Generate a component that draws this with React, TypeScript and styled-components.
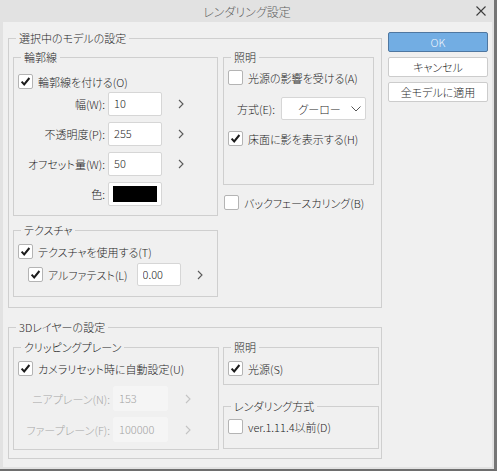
import styled, { createGlobalStyle } from 'styled-components';

const GlobalStyle = createGlobalStyle`
  html, body { margin: 0; padding: 0; background: #767676; }
  body {
    font-family: "Noto Sans CJK JP", "Noto Sans", sans-serif;
    font-size: 11px;
    font-weight: 300;
    font-feature-settings: "palt";
    color: #1f1f1f;
  }
`;

const Window = styled.div`
  box-sizing: border-box;
  width: 497px;
  height: 471px;
  display: flex;
  flex-direction: column;
  background: #e2e2e2;
  border-right: 3px solid #767676;
  border-bottom: 2px solid #6e6e6e;
`;

const TitleBar = styled.div`
  height: 22px;
  flex: none;
  display: grid;
  grid-template-columns: 1fr auto 1fr;
  align-items: center;
`;

const Title = styled.span`
  grid-column: 2;
  font-size: 12px;
  color: #5e5e5e;
`;

const Close = styled.svg`
  grid-column: 3;
  justify-self: end;
  margin-right: 8px;
`;

const Client = styled.div`
  flex: 1;
  margin: 0 2px 2px 3px;
  box-sizing: border-box;
  background: #f0f0f0;
  display: flex;
  gap: 6px;
  padding: 9px 0 0 5px;
`;

const MainColumn = styled.div`
  width: 374px;
  display: flex;
  flex-direction: column;
  gap: 12px;
`;

const ButtonColumn = styled.div`
  width: 100px;
  display: flex;
  flex-direction: column;
  gap: 5px;
  padding-top: 1px;
`;

const Button = styled.button<{ $primary?: boolean }>`
  box-sizing: border-box;
  height: 20px;
  padding: 0;
  font: inherit;
  border-radius: 2px;
  border: 1px solid ${(p) => (p.$primary ? '#4f77a0' : '#cccccc')};
  background: ${(p) => (p.$primary ? '#72ade3' : '#ffffff')};
  color: ${(p) => (p.$primary ? '#eef4fb' : '#1f1f1f')};
`;

const Group = styled.fieldset<{ $width?: number }>`
  margin: 0;
  padding: 0;
  min-width: 0;
  border: 1px solid #cfcfcf;
  ${(p) => (p.$width ? `width: ${p.$width}px; box-sizing: border-box;` : '')}
`;

const Legend = styled.legend`
  margin-left: 7px;
  padding: 0 3px;
  line-height: 14px;
`;

const Body = styled.div<{ $pad: string }>`
  padding: ${(p) => p.$pad};
  display: flex;
  flex-direction: column;
`;

const Split = styled.div<{ $gap: number }>`
  display: flex;
  align-items: flex-start;
  gap: ${(p) => p.$gap}px;
`;

const Stack = styled.div`
  display: flex;
  flex-direction: column;
`;

const CheckRow = styled.label<{ $indent?: number; $top?: number }>`
  display: flex;
  align-items: center;
  gap: 5px;
  height: 15px;
  margin-left: ${(p) => p.$indent ?? 0}px;
  margin-top: ${(p) => p.$top ?? 0}px;
`;

const Box = styled.span`
  box-sizing: border-box;
  width: 15px;
  height: 15px;
  flex: none;
  background: #ffffff;
  border: 1px solid #b4b4b4;
  border-radius: 2px;
  display: flex;
  align-items: center;
  justify-content: center;
`;

const ValueGrid = styled.div<{ $label: number; $input: number; $top: number }>`
  display: grid;
  grid-template-columns: ${(p) => p.$label}px ${(p) => p.$input}px auto;
  column-gap: 3px;
  row-gap: 6px;
  align-items: center;
  margin-top: ${(p) => p.$top}px;
`;

const FieldLabel = styled.span<{ $disabled?: boolean }>`
  text-align: right;
  white-space: nowrap;
  color: ${(p) => (p.$disabled ? '#a8a8a8' : '#1f1f1f')};
`;

const NumberBox = styled.input<{ $width?: number; $height?: number }>`
  box-sizing: border-box;
  width: ${(p) => p.$width ?? 54}px;
  height: ${(p) => p.$height ?? 24}px;
  padding: 0 0 2px 5px;
  font: inherit;
  color: #1f1f1f;
  background: #ffffff;
  border: 1px solid #d6d6d6;
  border-radius: 2px;
  outline: none;
  &:disabled {
    background: #f5f5f5;
    border-color: #f5f5f5;
    color: #a4a4a4;
  }
`;

const Arrow = styled.svg<{ $offset: number; $disabled?: boolean }>`
  margin-left: ${(p) => p.$offset}px;
  color: ${(p) => (p.$disabled ? '#c4c4c4' : '#5a5a5a')};
`;

const Swatch = styled.div`
  box-sizing: border-box;
  width: 54px;
  height: 24px;
  padding: 3px 4px;
  background: #ffffff;
  border: 1px solid #d6d6d6;
  border-radius: 2px;
  &::after {
    content: '';
    display: block;
    height: 100%;
    background: #000000;
  }
`;

const InlineRow = styled.div<{ $indent?: number; $top?: number; $gap: number }>`
  display: flex;
  align-items: center;
  gap: ${(p) => p.$gap}px;
  margin-left: ${(p) => p.$indent ?? 0}px;
  margin-top: ${(p) => p.$top ?? 0}px;
`;

const Select = styled.div`
  box-sizing: border-box;
  width: 85px;
  height: 23px;
  display: grid;
  grid-template-columns: 1fr auto;
  align-items: center;
  background: #ffffff;
  border: 1px solid #d6d6d6;
  border-radius: 2px;
  padding-right: 4px;
  & > span {
    text-align: center;
    padding-left: 6px;
  }
`;

const Check = ({ on }: { on?: boolean }) => (
  <Box>
    {on && (
      <svg width="13" height="13" viewBox="0 0 13 13">
        <path d="M2.6 6.6 L5.2 9.4 L10.4 3" fill="none" stroke="#1c1c1c" strokeWidth="2" />
      </svg>
    )}
  </Box>
);

const Chevron = ({ offset, disabled }: { offset: number; disabled?: boolean }) => (
  <Arrow $offset={offset} $disabled={disabled} width="6" height="10" viewBox="0 0 6 10">
    <path d="M1 1 L5 5 L1 9" fill="none" stroke="currentColor" strokeWidth="1.1" />
  </Arrow>
);

export default function App() {
  return (
    <>
      <GlobalStyle />
      <Window>
        <TitleBar>
          <Title>レンダリング設定</Title>
          <Close width="10" height="10" viewBox="0 0 10 10">
            <path d="M0.5 0.5 L9.5 9.5 M9.5 0.5 L0.5 9.5" stroke="#3c3c3c" strokeWidth="1.1" />
          </Close>
        </TitleBar>
        <Client>
          <MainColumn>
            <Group>
              <Legend>選択中のモデルの設定</Legend>
              <Body $pad="5px 7px 10px 4px">
                <Split $gap={5}>
                  <Stack>
                    <Group $width={205}>
                      <Legend>輪郭線</Legend>
                      <Body $pad="10px 4px 9px 4px">
                        <CheckRow>
                          <Check on />
                          輪郭線を付ける(O)
                        </CheckRow>
                        <ValueGrid $label={87} $input={54} $top={3}>
                          <FieldLabel>幅(W):</FieldLabel>
                          <NumberBox readOnly value="10" />
                          <Chevron offset={13} />
                          <FieldLabel>不透明度(P):</FieldLabel>
                          <NumberBox readOnly value="255" />
                          <Chevron offset={13} />
                          <FieldLabel>オフセット量(W):</FieldLabel>
                          <NumberBox readOnly value="50" />
                          <Chevron offset={13} />
                          <FieldLabel>色:</FieldLabel>
                          <Swatch />
                        </ValueGrid>
                      </Body>
                    </Group>
                    <Group $width={205} style={{ marginTop: 7 }}>
                      <Legend>テクスチャ</Legend>
                      <Body $pad="7px 4px 10px 4px">
                        <CheckRow>
                          <Check on />
                          テクスチャを使用する(T)
                        </CheckRow>
                        <InlineRow $indent={10} $top={4} $gap={0}>
                          <CheckRow>
                            <Check on />
                            アルファテスト(L)
                          </CheckRow>
                          <NumberBox readOnly value="0.00" $width={44} $height={23} style={{ marginLeft: 9 }} />
                          <Chevron offset={16} />
                        </InlineRow>
                      </Body>
                    </Group>
                  </Stack>
                  <Stack>
                    <Group $width={151}>
                      <Legend>照明</Legend>
                      <Body $pad="6px 4px 38px 4px">
                        <CheckRow>
                          <Check />
                          光源の影響を受ける(A)
                        </CheckRow>
                        <InlineRow $indent={9} $top={12} $gap={6}>
                          <FieldLabel>方式(E):</FieldLabel>
                          <Select>
                            <span>グーロー</span>
                            <svg width="10" height="6" viewBox="0 0 10 6">
                              <path d="M0.5 0.5 L5 5 L9.5 0.5" fill="none" stroke="#555" strokeWidth="1" />
                            </svg>
                          </Select>
                        </InlineRow>
                        <CheckRow $top={11}>
                          <Check on />
                          床面に影を表示する(H)
                        </CheckRow>
                      </Body>
                    </Group>
                    <CheckRow $indent={1} $top={10}>
                      <Check />
                      バックフェースカリング(B)
                    </CheckRow>
                  </Stack>
                </Split>
              </Body>
            </Group>

            <Group>
              <Legend>3Dレイヤーの設定</Legend>
              <Body $pad="6px 2px 8px 4px">
                <Split $gap={4}>
                  <Group $width={206}>
                    <Legend>クリッピングプレーン</Legend>
                    <Body $pad="7px 4px 7px 4px">
                      <CheckRow>
                        <Check on />
                        カメラリセット時に自動設定(U)
                      </CheckRow>
                      <ValueGrid $label={92} $input={55} $top={10}>
                        <FieldLabel $disabled>ニアプレーン(N):</FieldLabel>
                        <NumberBox disabled value="153" $width={55} $height={25} />
                        <Chevron offset={14} disabled />
                        <FieldLabel $disabled>ファープレーン(F):</FieldLabel>
                        <NumberBox disabled value="100000" $width={55} $height={25} />
                        <Chevron offset={14} disabled />
                      </ValueGrid>
                    </Body>
                  </Group>
                  <Stack>
                    <Group $width={156}>
                      <Legend>照明</Legend>
                      <Body $pad="7px 4px 8px 4px">
                        <CheckRow>
                          <Check on />
                          光源(S)
                        </CheckRow>
                      </Body>
                    </Group>
                    <Group $width={156} style={{ marginTop: 14 }}>
                      <Legend>レンダリング方式</Legend>
                      <Body $pad="6px 4px 14px 4px">
                        <CheckRow>
                          <Check />
                          ver.1.11.4以前(D)
                        </CheckRow>
                      </Body>
                    </Group>
                  </Stack>
                </Split>
              </Body>
            </Group>
          </MainColumn>
          <ButtonColumn>
            <Button $primary>OK</Button>
            <Button>キャンセル</Button>
            <Button>全モデルに適用</Button>
          </ButtonColumn>
        </Client>
      </Window>
    </>
  );
}
